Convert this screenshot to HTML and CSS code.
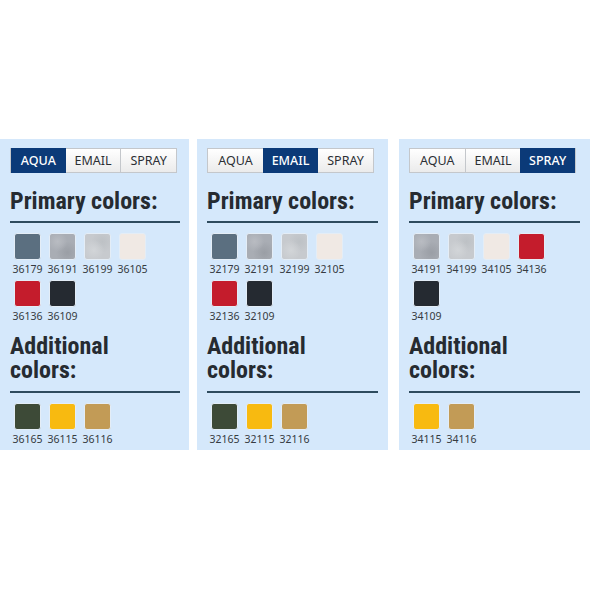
FILE: index.html
```html
<!DOCTYPE html>
<html lang="en">
  <head>
    <meta charset="UTF-8" />
    <meta name="viewport" content="width=device-width, initial-scale=1.0" />
    <title>Colors</title>
    <link rel="stylesheet" href="styles.css">
  </head>
  <body>
    <div class="fila">
      <!-- panel AQUA -->
      <div class="panel panel1">
        <div class="tabs">
          <span class="tab activo">AQUA</span>
          <span class="tab">EMAIL</span>
          <span class="tab">SPRAY</span>
        </div>
        <h2 class="titulo">Primary colors:</h2>
        <div class="muestras">
          <div class="muestra"><span class="color c179"></span>36179</div>
          <div class="muestra"><span class="color c191"></span>36191</div>
          <div class="muestra"><span class="color c199"></span>36199</div>
          <div class="muestra"><span class="color c105"></span>36105</div>
          <div class="muestra"><span class="color c136"></span>36136</div>
          <div class="muestra"><span class="color c109"></span>36109</div>
        </div>
        <h2 class="titulo segundo">Additional<br />colors:</h2>
        <div class="muestras">
          <div class="muestra"><span class="color c165"></span>36165</div>
          <div class="muestra"><span class="color c115"></span>36115</div>
          <div class="muestra"><span class="color c116"></span>36116</div>
        </div>
      </div>

      <!-- panel EMAIL -->
      <div class="panel panel2">
        <div class="tabs">
          <span class="tab">AQUA</span>
          <span class="tab activo">EMAIL</span>
          <span class="tab">SPRAY</span>
        </div>
        <h2 class="titulo">Primary colors:</h2>
        <div class="muestras">
          <div class="muestra"><span class="color c179"></span>32179</div>
          <div class="muestra"><span class="color c191"></span>32191</div>
          <div class="muestra"><span class="color c199"></span>32199</div>
          <div class="muestra"><span class="color c105"></span>32105</div>
          <div class="muestra"><span class="color c136"></span>32136</div>
          <div class="muestra"><span class="color c109"></span>32109</div>
        </div>
        <h2 class="titulo segundo">Additional<br />colors:</h2>
        <div class="muestras">
          <div class="muestra"><span class="color c165"></span>32165</div>
          <div class="muestra"><span class="color c115"></span>32115</div>
          <div class="muestra"><span class="color c116"></span>32116</div>
        </div>
      </div>

      <!-- panel SPRAY -->
      <div class="panel panel3">
        <div class="tabs">
          <span class="tab">AQUA</span>
          <span class="tab">EMAIL</span>
          <span class="tab activo">SPRAY</span>
        </div>
        <h2 class="titulo">Primary colors:</h2>
        <div class="muestras">
          <div class="muestra"><span class="color c191"></span>34191</div>
          <div class="muestra"><span class="color c199"></span>34199</div>
          <div class="muestra"><span class="color c105"></span>34105</div>
          <div class="muestra"><span class="color c136"></span>34136</div>
          <div class="muestra"><span class="color c109"></span>34109</div>
        </div>
        <h2 class="titulo segundo">Additional<br />colors:</h2>
        <div class="muestras">
          <div class="muestra"><span class="color c115"></span>34115</div>
          <div class="muestra"><span class="color c116"></span>34116</div>
        </div>
      </div>
    </div>
  </body>
</html>
```

FILE: styles.css
```css
body {
  margin: 0;
  background: white;
  font-family: "Noto Sans", Arial, sans-serif;
}

.fila {
  display: flex;
  padding-top: 139px;
}

.panel {
  height: 311px;
  background: #d5e8fb;
  padding: 9px 10px 0 10px;
  box-sizing: border-box;
}
.panel1 {
  width: 189px;
  padding-right: 9px;
}
.panel2 {
  width: 191px;
  margin-left: 8px;
}
.panel3 {
  width: 191px;
  margin-left: 11px;
}

/* pestañas */
.tabs {
  display: flex;
  width: 167px;
  height: 25px;
  box-sizing: border-box;
  border: 1px solid #c4c7cb;
  background: linear-gradient(#ffffff, #ebebeb);
}
.tab {
  flex: 1;
  text-align: center;
  line-height: 23px;
  font-size: 12.5px;
  color: #2b2f34;
  border-left: 1px solid #c4c7cb;
}
.tab:first-child {
  border-left: none;
}
.activo {
  background: #0b3a78;
  color: white;
  border-left: none;
  margin: -1px 0;
  line-height: 25px;
  font-weight: 500;
}
.activo + .tab {
  border-left: none;
}

.titulo {
  margin: 16px 0 0 0;
  padding-bottom: 8px;
  border-bottom: 2px solid #2e4b5e;
  font-family: "Roboto Condensed", "Open Sans", sans-serif;
  font-stretch: 75%;
  font-size: 24px;
  line-height: 24px;
  font-weight: bold;
  color: #262b31;
  white-space: nowrap;
}
.segundo {
  margin-top: 11px;
  padding-bottom: 9px;
}

/* muestras de color */
.muestras {
  display: flex;
  flex-wrap: wrap;
  row-gap: 4px;
  margin-top: 10px;
}
.muestra {
  width: 35px;
  text-align: center;
  font-size: 10.5px;
  line-height: 14px;
  color: #363b41;
}
.color {
  display: block;
  width: 25px;
  height: 25px;
  margin: 0 auto 2px auto;
  border: 1px solid #e4edf6;
  border-radius: 3px;
}
.c179 { background: #5b6f80; }
.c191 {
  background: radial-gradient(circle at 30% 30%, #b9bcc2 0, transparent 40%),
    radial-gradient(circle at 70% 75%, #9a9ea5 0, transparent 45%), #a9adb4;
}
.c199 {
  background: radial-gradient(circle at 35% 65%, #d2d5d8 0, transparent 45%),
    radial-gradient(circle at 70% 30%, #bdc1c5 0, transparent 45%), #c7cace;
}
.c105 { background: #f0e9e4; }
.c136 { background: #c41c2c; }
.c109 { background: #252a31; }
.c165 { background: #3d4a37; }
.c115 { background: #f8ba10; }
.c116 { background: #c29b56; }
```
